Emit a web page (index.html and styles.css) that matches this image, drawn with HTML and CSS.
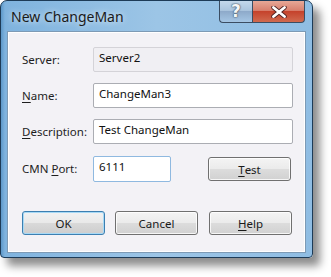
FILE: index.html
```html
<!DOCTYPE html>
<html>
<head>
<meta charset="utf-8">
<link rel="stylesheet" href="styles.css">
</head>
<body>
<div class="window">
  <div class="titlebar">
    <div class="title">New ChangeMan</div>
    <div class="caption-buttons">
      <div class="cap-btn help-btn"><span>?</span></div>
      <div class="cap-btn close-btn">
        <svg width="16" height="12" viewBox="0 0 16 12"><path d="M2.5 1.5 L13.5 10.5 M13.5 1.5 L2.5 10.5" stroke="#4a2020" stroke-width="4.4" stroke-linecap="round"/><path d="M2.5 1.5 L13.5 10.5 M13.5 1.5 L2.5 10.5" stroke="#ffffff" stroke-width="2.8" stroke-linecap="round"/></svg>
      </div>
    </div>
  </div>
  <div class="client">
    <div class="form">
      <div class="label">Server:</div>
      <div class="field disabled">Server2</div>
      <div class="label"><u>N</u>ame:</div>
      <div class="field">ChangeMan3</div>
      <div class="label"><u>D</u>escription:</div>
      <div class="field">Test ChangeMan</div>
      <div class="label">CMN <u>P</u>ort:</div>
      <div class="port-row">
        <div class="field port focus">6111</div>
        <div class="button test"><u>T</u>est</div>
      </div>
    </div>
    <div class="buttons">
      <div class="button default">OK</div>
      <div class="button">Cancel</div>
      <div class="button"><u>H</u>elp</div>
    </div>
  </div>
</div>
</body>
</html>
```
FILE: styles.css
```css
html, body {
  margin: 0;
  padding: 0;
  background: #ffffff;
}
body {
  width: 331px;
  height: 277px;
  overflow: hidden;
  font-family: "Segoe UI", "Noto Sans", "Open Sans", sans-serif;
  font-size: 11.5px;
  color: #1e1e1e;
}
.window {
  width: 313px;
  height: 258px;
  box-sizing: border-box;
  border: 1px solid #1d3b57;
  border-radius: 7px 7px 4px 4px;
  background: linear-gradient(to right, #5d98c9 0px, #7fb3de 4px, #9cc5e6 50%, #8fbde3 100%);
  box-shadow: 7px 8px 9px rgba(0,0,0,0.45);
  display: flex;
  flex-direction: column;
  padding: 0 7px 5px 7px;
}
.titlebar {
  height: 31px;
  display: flex;
  align-items: flex-start;
}
.title {
  margin-top: 6px;
  margin-left: 3px;
  font-size: 14px;
  color: #1a1a1a;
  text-shadow: 0 0 6px rgba(255,255,255,0.9);
}
.caption-buttons {
  margin-left: auto;
  display: flex;
}
.cap-btn {
  height: 22px;
  box-sizing: border-box;
  border: 1px solid #3b4d62;
  border-top: none;
  display: flex;
  align-items: center;
  justify-content: center;
}
.help-btn {
  width: 33px;
  border-radius: 0 0 0 4px;
  background: linear-gradient(#c3d8eb 0%, #abc5de 45%, #8eaaca 50%, #a5c6e4 100%);
  border-right: none;
}
.help-btn span {
  font-family: "DejaVu Sans", sans-serif;
  font-weight: bold;
  font-size: 17px;
  line-height: 1;
  color: #f4f6f8;
  text-shadow: 0 0 1px #4a5a6c, 0 0 1px #4a5a6c, 0 0 2px #4a5a6c;
}
.close-btn {
  width: 53px;
  border-radius: 0 0 4px 0;
  background: linear-gradient(#e7a897 0%, #d8806e 45%, #c5432c 50%, #d06a4f 100%);
}
.client {
  flex: 1;
  background: #f3f2f6;
  border: 1px solid #ffffff;
  outline: 1px solid #7d9ab5;
  display: flex;
  flex-direction: column;
  padding: 14px 10px 0 13px;
}
.form {
  display: grid;
  grid-template-columns: 71px 200px;
  row-gap: 11px;
  align-items: center;
}
.label {
  line-height: 25px;
}
.label u, .button u {
  text-decoration-thickness: 1px;
  text-underline-offset: 2px;
}
.field {
  height: 25px;
  box-sizing: border-box;
  border: 1px solid #abadb3;
  border-radius: 2px;
  background: #ffffff;
  padding: 0 0 0 5px;
  line-height: 19px;
  color: #111;
}
.field.disabled {
  background: #f0eff3;
  border-color: #d4d3d8;
}
.port-row {
  display: flex;
  align-items: center;
  margin-top: 1px;
}
.field.port {
  width: 78px;
  height: 26px;
}
.field.focus {
  border-color: #8fb9e0;
}
.button {
  width: 83px;
  height: 24px;
  box-sizing: border-box;
  border: 1px solid #707070;
  border-radius: 3px;
  background: linear-gradient(#f4f4f4 0%, #ebebeb 48%, #dcdcdc 52%, #d1d1d1 100%);
  box-shadow: inset 0 0 0 1px rgba(255,255,255,0.8);
  display: flex;
  align-items: center;
  justify-content: center;
  color: #1a1a1a;
}
.button.test {
  margin-left: 37px;
}
.buttons {
  display: flex;
  gap: 10px;
  margin-top: 29px;
}
.button.default {
  border-color: #3c7fb1;
  box-shadow: inset 0 0 0 1px #a7d9f5;
  background: linear-gradient(#f2f2f2 0%, #e9e9e9 48%, #d9d9d9 52%, #cdcdcd 100%);
}
.buttons .button:nth-child(3) {
  margin-left: 1px;
}
```
